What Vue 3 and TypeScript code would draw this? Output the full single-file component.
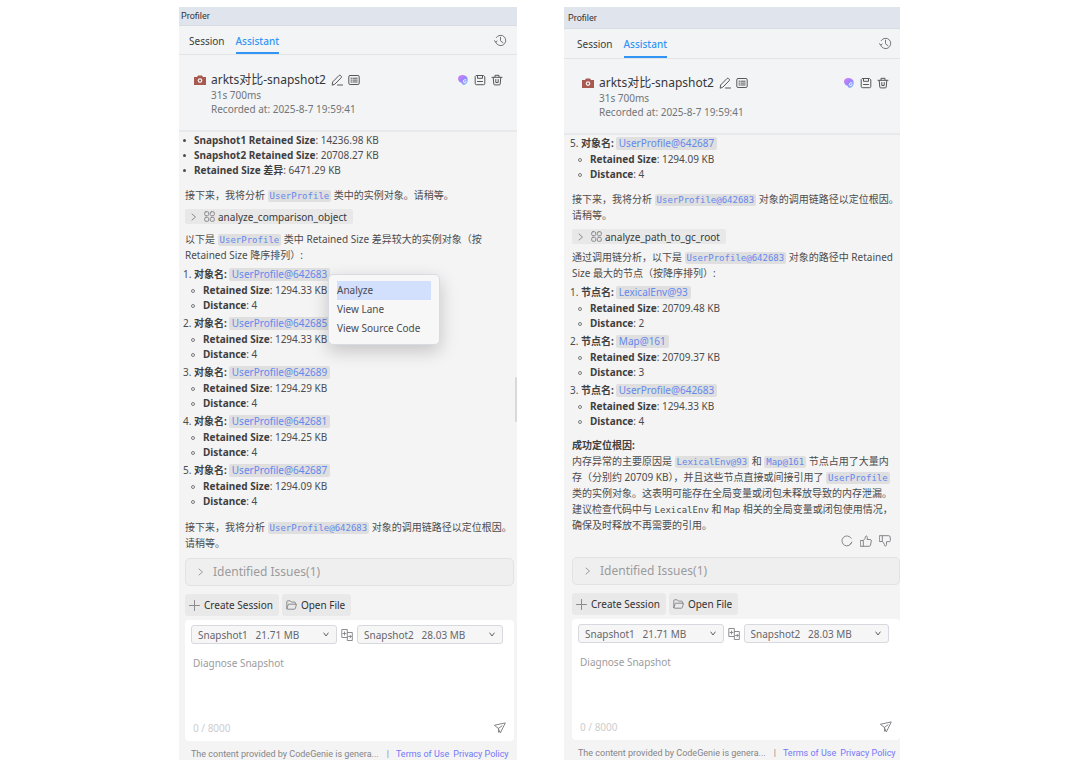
<script setup lang="ts">
type Segment = { kind: 'text' | 'code' | 'mono'; text: string }
type Entry = { no: number; label: string; name: string; size: string; distance: number; menu?: boolean }
type Block =
  | { kind: 'summary'; rows: { label: string; value: string }[] }
  | { kind: 'para'; title?: string; parts: Segment[] }
  | { kind: 'tool'; name: string }
  | { kind: 'list'; entries: Entry[] }
type Panel = { id: string; blocks: Block[]; feedback: boolean }

const t = (text: string): Segment => ({ kind: 'text', text })
const c = (text: string): Segment => ({ kind: 'code', text })
const m = (text: string): Segment => ({ kind: 'mono', text })

const nextStep: Block = {
  kind: 'para',
  parts: [t('接下来，我将分析 '), c('UserProfile@642683'), t(' 对象的调用链路径以定位根因。请稍等。')],
}

const panels: Panel[] = [
  {
    id: 'left',
    feedback: false,
    blocks: [
      {
        kind: 'summary',
        rows: [
          { label: 'Snapshot1 Retained Size', value: '14236.98 KB' },
          { label: 'Snapshot2 Retained Size', value: '20708.27 KB' },
          { label: 'Retained Size 差异', value: '6471.29 KB' },
        ],
      },
      { kind: 'para', parts: [t('接下来，我将分析 '), c('UserProfile'), t(' 类中的实例对象。请稍等。')] },
      { kind: 'tool', name: 'analyze_comparison_object' },
      {
        kind: 'para',
        parts: [t('以下是 '), c('UserProfile'), t(' 类中 Retained Size 差异较大的实例对象（按 Retained Size 降序排列）:')],
      },
      {
        kind: 'list',
        entries: [
          { no: 1, label: '对象名', name: 'UserProfile@642683', size: '1294.33 KB', distance: 4, menu: true },
          { no: 2, label: '对象名', name: 'UserProfile@642685', size: '1294.33 KB', distance: 4 },
          { no: 3, label: '对象名', name: 'UserProfile@642689', size: '1294.29 KB', distance: 4 },
          { no: 4, label: '对象名', name: 'UserProfile@642681', size: '1294.25 KB', distance: 4 },
          { no: 5, label: '对象名', name: 'UserProfile@642687', size: '1294.09 KB', distance: 4 },
        ],
      },
      nextStep,
    ],
  },
  {
    id: 'right',
    feedback: true,
    blocks: [
      {
        kind: 'list',
        entries: [{ no: 5, label: '对象名', name: 'UserProfile@642687', size: '1294.09 KB', distance: 4 }],
      },
      nextStep,
      { kind: 'tool', name: 'analyze_path_to_gc_root' },
      {
        kind: 'para',
        parts: [t('通过调用链分析，以下是 '), c('UserProfile@642683'), t(' 对象的路径中 Retained Size 最大的节点（按降序排列）:')],
      },
      {
        kind: 'list',
        entries: [
          { no: 1, label: '节点名', name: 'LexicalEnv@93', size: '20709.48 KB', distance: 2 },
          { no: 2, label: '节点名', name: 'Map@161', size: '20709.37 KB', distance: 3 },
          { no: 3, label: '节点名', name: 'UserProfile@642683', size: '1294.33 KB', distance: 4 },
        ],
      },
      {
        kind: 'para',
        title: '成功定位根因:',
        parts: [
          t('内存异常的主要原因是 '),
          c('LexicalEnv@93'),
          t(' 和 '),
          c('Map@161'),
          t(' 节点占用了大量内存（分别约 20709 KB），并且这些节点直接或间接引用了 '),
          c('UserProfile'),
          t(' 类的实例对象。这表明可能存在全局变量或闭包未释放导致的内存泄漏。建议检查代码中与 '),
          m('LexicalEnv'),
          t(' 和 '),
          m('Map'),
          t(' 相关的全局变量或闭包使用情况，确保及时释放不再需要的引用。'),
        ],
      },
    ],
  },
]
</script>

<template>
  <main class="page">
    <section v-for="p in panels" :key="p.id" class="panel" :class="p.id">
      <header class="title">Profiler</header>

      <nav class="tabs">
        <button class="tab" type="button">Session</button>
        <button class="tab active" type="button">Assistant</button>
        <button class="icon-btn history" type="button" aria-label="History">
          <svg width="13" height="13" viewBox="0 0 13 13">
            <path d="M1.6 8A5.2 5.2 0 1 0 2.2 3.6M0.6 6.6l1 1.6 1.5-1.2M6.5 3.2v3.6l2.6 2" />
          </svg>
        </button>
      </nav>

      <div class="session">
        <div class="session-row">
          <svg class="camera" width="12" height="10" viewBox="0 0 12 10">
            <path d="M0 2h3l1-1.6h4L9 2h3v8H0z" fill="#a85a50" />
            <circle cx="6" cy="5.6" r="2.3" fill="#f2f4f5" />
            <circle cx="6" cy="5.6" r="1.1" fill="#a85a50" />
          </svg>
          <h1 class="name">arkts对比-snapshot2</h1>
          <button class="icon-btn" type="button" aria-label="Rename">
            <svg width="12" height="12" viewBox="0 0 12 12">
              <path d="M1.2 10.8l.5-2.9L8 1.5q.8-.7 1.6 0l.6.6q.7.8 0 1.6L4 10zM6.5 11h5" />
            </svg>
          </button>
          <button class="icon-btn" type="button" aria-label="Details">
            <svg width="12" height="12" viewBox="0 0 12 12">
              <rect x="0.8" y="1.5" width="10.4" height="9" rx="1.3" />
              <path d="M3 4.2h1M5.2 4.2h4M3 6.1h1M5.2 6.1h4M3 8h1M5.2 8h4" />
            </svg>
          </button>
          <span class="actions">
            <button class="icon-btn" type="button" aria-label="CodeGenie">
              <svg width="12" height="12" viewBox="0 0 12 12">
                <defs>
                  <linearGradient :id="'genie-' + p.id" x1="0" y1="0" x2="1" y2="1">
                    <stop offset="0" stop-color="#e07cf2" />
                    <stop offset="0.5" stop-color="#9a86ff" />
                    <stop offset="1" stop-color="#8fd0ff" />
                  </linearGradient>
                </defs>
                <path
                  class="solid"
                  d="M1 4Q2 .8 5.500 1 9 .8 10.300 3.500 11.800 6.500 10 9 8.500 11 6.500 11 4.800 10.500 4.500 8.800 1 8 1 4z"
                  :fill="`url(#genie-${p.id})`"
                />
                <path d="M8.800 5.800q-2.300-.6-2.600 1.300.1 1.700 1.800 1.500 1-.2.900-1.200" stroke="#e4f1ff" />
              </svg>
            </button>
            <button class="icon-btn" type="button" aria-label="Save">
              <svg width="12" height="12" viewBox="0 0 12 12">
                <path d="M2.500 1.500h7l1.300 1.300v6.700q0 1.200-1.200 1.200H2.400q-1.200 0-1.200-1.200V2.800zM3.500 1.600v2.700h5V1.600M3.500 7.500h5" />
              </svg>
            </button>
            <button class="icon-btn" type="button" aria-label="Delete">
              <svg width="12" height="12" viewBox="0 0 12 12">
                <path d="M1 3.300h10M4 3V1.300h4V3M2.200 3.500l.6 6.500q.1.900 1 .900h4.400q.9 0 1-.9l.6-6.500M4.800 5.500v3h2.400v-3" />
              </svg>
            </button>
          </span>
        </div>
        <p class="meta">31s 700ms</p>
        <p class="meta">Recorded at: 2025-8-7 19:59:41</p>
      </div>

      <div class="chat">
        <template v-for="(b, i) in p.blocks" :key="i">
          <ul v-if="b.kind === 'summary'" class="summary">
            <li v-for="r in b.rows" :key="r.label"><b>{{ r.label }}</b>: {{ r.value }}</li>
          </ul>
          <div v-else-if="b.kind === 'para'" class="para" :class="{ titled: b.title }">
            <strong v-if="b.title" class="para-title">{{ b.title }}</strong>
            <p>
              <template v-for="(s, k) in b.parts" :key="k"><code v-if="s.kind === 'code'" class="chip">{{ s.text }}</code><code v-else-if="s.kind === 'mono'">{{ s.text }}</code><template v-else>{{ s.text }}</template></template>
            </p>
          </div>
          <button v-else-if="b.kind === 'tool'" class="tool" type="button">
            <svg width="6" height="8" viewBox="0 0 6 8"><path d="M1 1l3.500 3L1 7" /></svg>
            <svg width="11" height="11" viewBox="0 0 11 11">
              <rect x="0.700" y="0.700" width="4" height="4" rx="1.200" />
              <rect x="6.300" y="0.700" width="4" height="4" rx="1.200" />
              <rect x="0.700" y="6.300" width="4" height="4" rx="1.200" />
              <rect x="6.300" y="6.300" width="4" height="4" rx="1.200" />
            </svg>
            {{ b.name }}
          </button>
          <ol v-else class="entries">
            <li v-for="e in b.entries" :key="e.no" class="entry">
              <div class="entry-name">
                {{ e.no }}. <b>{{ e.label }}:</b>
                <a class="object" href="#">{{ e.name }}</a>
                <menu v-if="e.menu" class="menu">
                  <li><button type="button" class="current">Analyze</button></li>
                  <li><button type="button">View Lane</button></li>
                  <li><button type="button">View Source Code</button></li>
                </menu>
              </div>
              <ul class="facts">
                <li><b>Retained Size</b>: {{ e.size }}</li>
                <li><b>Distance</b>: {{ e.distance }}</li>
              </ul>
            </li>
          </ol>
        </template>
        <div v-if="p.feedback" class="feedback">
          <button class="icon-btn" type="button" aria-label="Regenerate">
            <svg width="12" height="12" viewBox="0 0 12 12"><path d="M10.800 7.200A5 5 0 1 1 10.200 3.200M9 9.300l1.800-2.100" /></svg>
          </button>
          <button class="icon-btn" type="button" aria-label="Like">
            <svg width="12" height="12" viewBox="0 0 12 12">
              <path d="M.7 5.500h2.600v5.800H.7zM3.300 5.500Q5.500 4 5.500 1.500 6 .3 7 1.300q.8 1.200 0 3.200h3.300q1.200.2 1 1.500l-.8 4.200q-.3 1.100-1.300 1.100H3.300" />
            </svg>
          </button>
          <button class="icon-btn" type="button" aria-label="Dislike">
            <svg width="12" height="12" viewBox="0 0 12 12">
              <path d="M.7.7h2.600v5.800H.7zM3.300.7h6.500q1.200 0 1.300 1.200l.3 3.600q0 1.200-1.200 1.200H7.500v3q-.1 1.300-1.200 1.300-.8 0-.9-1.300Q5.300 7.600 3.300 6.500" />
            </svg>
          </button>
        </div>
        <span v-else class="thumb"></span>
      </div>

      <div class="bottom">
        <button class="issues" type="button">
          <svg width="6" height="8" viewBox="0 0 6 8"><path d="M1 1l3.500 3L1 7" /></svg>
          Identified Issues(1)
        </button>
        <div class="buttons">
          <button type="button">
            <svg width="11" height="11" viewBox="0 0 11 11"><path d="M5.500.5v10M.5 5.500h10" /></svg>
            Create Session
          </button>
          <button type="button">
            <svg width="11" height="10" viewBox="0 0 11 10">
              <path d="M.8 8.500V1.700q0-.9.900-.9h2.500l1.200 1.300h3.100q.9 0 .9.900v1M.8 8.500l1.600-4.300h8.100L9.400 8.300q-.2.900-1 .9H1.500q-.7 0-.7-.7z" />
            </svg>
            Open File
          </button>
        </div>
        <div class="composer">
          <div class="pickers">
            <label class="picker">
              <select aria-label="First snapshot">
                <option>Snapshot1&nbsp;&nbsp; 21.71 MB</option>
              </select>
              <svg width="6" height="5" viewBox="0 0 6 5"><path d="M.8 1L3 4 5.200 1" /></svg>
            </label>
            <svg class="compare" width="12" height="12" viewBox="0 0 12 12">
              <path d="M6.300 8.500H.8v-8h5.500v11h5v-8H6.300M2 4.500h3M3.500 3v3M7.500 7.500h2.800M9 6.200l1.300 1.300L9 8.800" />
            </svg>
            <label class="picker">
              <select aria-label="Second snapshot">
                <option>Snapshot2&nbsp;&nbsp; 28.03 MB</option>
              </select>
              <svg width="6" height="5" viewBox="0 0 6 5"><path d="M.8 1L3 4 5.200 1" /></svg>
            </label>
          </div>
          <textarea placeholder="Diagnose Snapshot" aria-label="Message"></textarea>
          <div class="send-row">
            <span>0 / 8000</span>
            <button class="icon-btn" type="button" aria-label="Send">
              <svg width="12" height="12" viewBox="0 0 12 12">
                <path d="M.7 3.200L11.300.9 6.300 11 4.300 6.500zM4.300 6.500L8 3.800M4.500 6.800v3.400l1.300-1" />
              </svg>
            </button>
          </div>
        </div>
        <footer class="legal">
          <span>The content provided by CodeGenie is genera...</span>
          <span class="bar">|</span>
          <a href="#">Terms of Use</a>
          <a href="#">Privacy Policy</a>
        </footer>
      </div>
    </section>
  </main>
</template>

<style>
body {
  margin: 0;
  background: #fff;
}
</style>

<style scoped>
* {
  box-sizing: border-box;
}
.page {
  display: grid;
  grid-template-columns: 338fr 336fr;
  gap: 47px;
  min-height: 100vh;
  padding: 7px 180px 22px 179px;
  font: 10px/16px "Noto Sans", "Noto Sans CJK SC", sans-serif;
  color: #4c4c4e;
}
.panel {
  --title: 19px;
  --tabs: 29px;
  --session: 77px;
  --inset: 6px;
  --edge: 3px;
  --foot: 19px;
  --para: 8px;
  --reply: 7px;
  display: flex;
  flex-direction: column;
  min-width: 0;
  background: #f4f4f4;
}
.panel.right {
  --title: 22px;
  --tabs: 30px;
  --session: 76px;
  --inset: 8px;
  --edge: 0px;
  --foot: 20px;
  --para: 7px;
  --reply: 5px;
}
button {
  font: inherit;
  color: inherit;
  border: 0;
  margin: 0;
  padding: 0;
  background: none;
  cursor: pointer;
}
svg {
  display: block;
  flex: none;
  fill: none;
  stroke: currentColor;
  stroke-width: 1;
  stroke-linecap: round;
  stroke-linejoin: round;
}
svg .solid,
.camera {
  stroke: none;
}
p,
ul,
ol,
menu {
  margin: 0;
  padding: 0;
  list-style: none;
}
.icon-btn {
  display: flex;
  color: #55575c;
}
.title {
  display: flex;
  align-items: center;
  height: var(--title);
  padding-left: 2px;
  background: #e0e4ed;
  border-bottom: 1px solid #d8dce3;
  font: 9px/12px Roboto, sans-serif;
  color: #333;
}
.right .title {
  padding-left: 4px;
}
.tabs {
  display: flex;
  align-items: stretch;
  gap: 11px;
  height: var(--tabs);
  padding: 0 10px;
  background: #f2f4f5;
  border-bottom: 1px solid #e2e4e6;
}
.right .tabs {
  padding: 0 8px 0 13px;
}
.tab {
  padding-top: 3px;
  border-bottom: 2px solid transparent;
  color: #3c3d40;
}
.tab.active {
  border-color: #3294f5;
  color: #3294f5;
  font-weight: 500;
}
.history {
  align-self: center;
  margin-left: auto;
  color: #77797d;
}
.session {
  height: var(--session);
  padding: 16px 14px 0 15px;
  background: #f2f4f5;
  border-bottom: 2px solid #e8e9eb;
}
.right .session {
  padding: 15px 11px 0 18px;
}
.session-row {
  display: flex;
  align-items: center;
  gap: 5px;
  height: 17px;
}
.name {
  margin: 0;
  font-size: 12px;
  line-height: 17px;
  font-weight: 400;
  white-space: nowrap;
  color: #36373a;
}
.actions {
  display: flex;
  gap: 5px;
  margin-left: auto;
}
.meta {
  padding-left: 17px;
  line-height: 14px;
  color: #727477;
}
.chat {
  position: relative;
  flex: 1;
  padding-left: var(--inset);
}
.summary {
  padding: 1px 0 1px 9px;
}
.summary li {
  position: relative;
  line-height: 15px;
}
.summary li::before,
.facts li::before {
  content: "";
  position: absolute;
  top: 6px;
  left: -11px;
  width: 3px;
  height: 3px;
  border-radius: 50%;
  background: #4c4c4e;
}
.facts li::before {
  left: -12px;
  width: 2px;
  height: 2px;
  border: 1px solid #7c7c7e;
  background: none;
}
b,
.para-title {
  font-weight: 700;
  color: #3f3f41;
}
.para {
  padding-top: var(--para);
}
.tool + .para {
  padding: var(--reply) 0 3px;
}
.para.titled {
  padding: 6px 4px 0 0;
}
.para-title {
  display: block;
}
code {
  font: 9px/12px "DejaVu Sans Mono", monospace;
}
.chip {
  padding: 1px 2px;
  border-radius: 2px;
  background: #dfdfdf;
  color: #6488ee;
}
.tool {
  display: flex;
  align-items: center;
  gap: 3px;
  height: 15px;
  margin-top: 6px;
  padding: 0 6px;
  border-radius: 2px;
  background: #e8e8e8;
  color: #38383a;
}
.tool svg {
  color: #8c8c90;
}
.tool svg:first-child {
  margin-right: 4px;
}
.entry {
  padding-bottom: 2px;
}
.entry-name {
  position: relative;
  margin-left: -2px;
  line-height: 17px;
}
.object {
  display: inline-block;
  margin-left: 2px;
  padding: 0 3px;
  border-radius: 2px;
  background: #dfdfdf;
  color: #6488ee;
  line-height: 13px;
  text-decoration: none;
}
.facts {
  padding-left: 18px;
}
.facts li {
  position: relative;
  line-height: 15px;
}
.menu {
  position: absolute;
  z-index: 2;
  top: 8px;
  left: 145px;
  width: 112px;
  padding: 6px 8px;
  border: 1px solid #d9dbe3;
  border-radius: 5px;
  background: #f7f7f8;
  box-shadow: 0 6px 18px rgba(0, 0, 0, 0.2);
}
.menu button {
  display: block;
  width: 100%;
  line-height: 19px;
  text-align: left;
  white-space: nowrap;
}
.menu .current {
  background: #d2dffd;
}
.feedback {
  display: flex;
  justify-content: flex-end;
  gap: 7px;
  padding: 2px 9px 0 0;
}
.feedback .icon-btn {
  color: #85868a;
}
.thumb {
  position: absolute;
  top: 245px;
  right: 0;
  width: 2px;
  height: 45px;
  border-radius: 1px;
  background: #d9d9d9;
}
.bottom {
  padding: 0 var(--edge) 0 var(--inset);
}
.issues {
  display: flex;
  align-items: center;
  gap: 9px;
  width: 100%;
  height: 28px;
  padding: 0 12px;
  border: 1px solid #e2e2e3;
  border-radius: 5px;
  background: #efefef;
  font-size: 12px;
  color: #9b9b9d;
}
.buttons {
  display: flex;
  gap: 3px;
  margin: 8px 0 4px;
}
.buttons button {
  display: flex;
  align-items: center;
  gap: 4px;
  height: 22px;
  padding: 0 6px 0 4px;
  border-radius: 3px;
  background: #e9e9e9;
  color: #323234;
}
.buttons svg {
  color: #8c8c90;
}
.composer {
  display: flex;
  flex-direction: column;
  height: 121px;
  padding: 5px 8px 5px 6px;
  border-radius: 4px;
  background: #fff;
}
.pickers {
  display: flex;
  align-items: center;
  gap: 4px;
  padding-right: 3px;
}
.picker {
  position: relative;
  flex: 1;
  min-width: 0;
}
.picker svg {
  position: absolute;
  top: 7px;
  right: 8px;
  color: #606064;
}
select {
  display: block;
  width: 100%;
  height: 19px;
  padding: 0 6px;
  border: 1px solid #d8d9df;
  border-radius: 3px;
  background: #f6f6f7;
  appearance: none;
  font: inherit;
  color: #66666a;
}
.compare {
  color: #8c8c90;
}
textarea {
  flex: 1;
  min-height: 0;
  padding: 11px 2px 0;
  border: 0;
  outline: 0;
  resize: none;
  background: none;
  font: inherit;
}
textarea::placeholder {
  color: #9c9c9e;
  opacity: 1;
}
.send-row {
  display: flex;
  align-items: center;
  justify-content: space-between;
  padding-left: 2px;
  color: #cdcdcf;
}
.send-row .icon-btn {
  color: #85868a;
}
.legal {
  display: flex;
  height: var(--foot);
  padding: 5px 0 0 6px;
  font: 9px/16px Roboto, "Noto Sans", sans-serif;
  white-space: nowrap;
  color: #858588;
}
.bar {
  margin: 0 7px 0 8px;
}
.legal a {
  margin-right: 4px;
  color: #7377f7;
  text-decoration: none;
}
</style>
